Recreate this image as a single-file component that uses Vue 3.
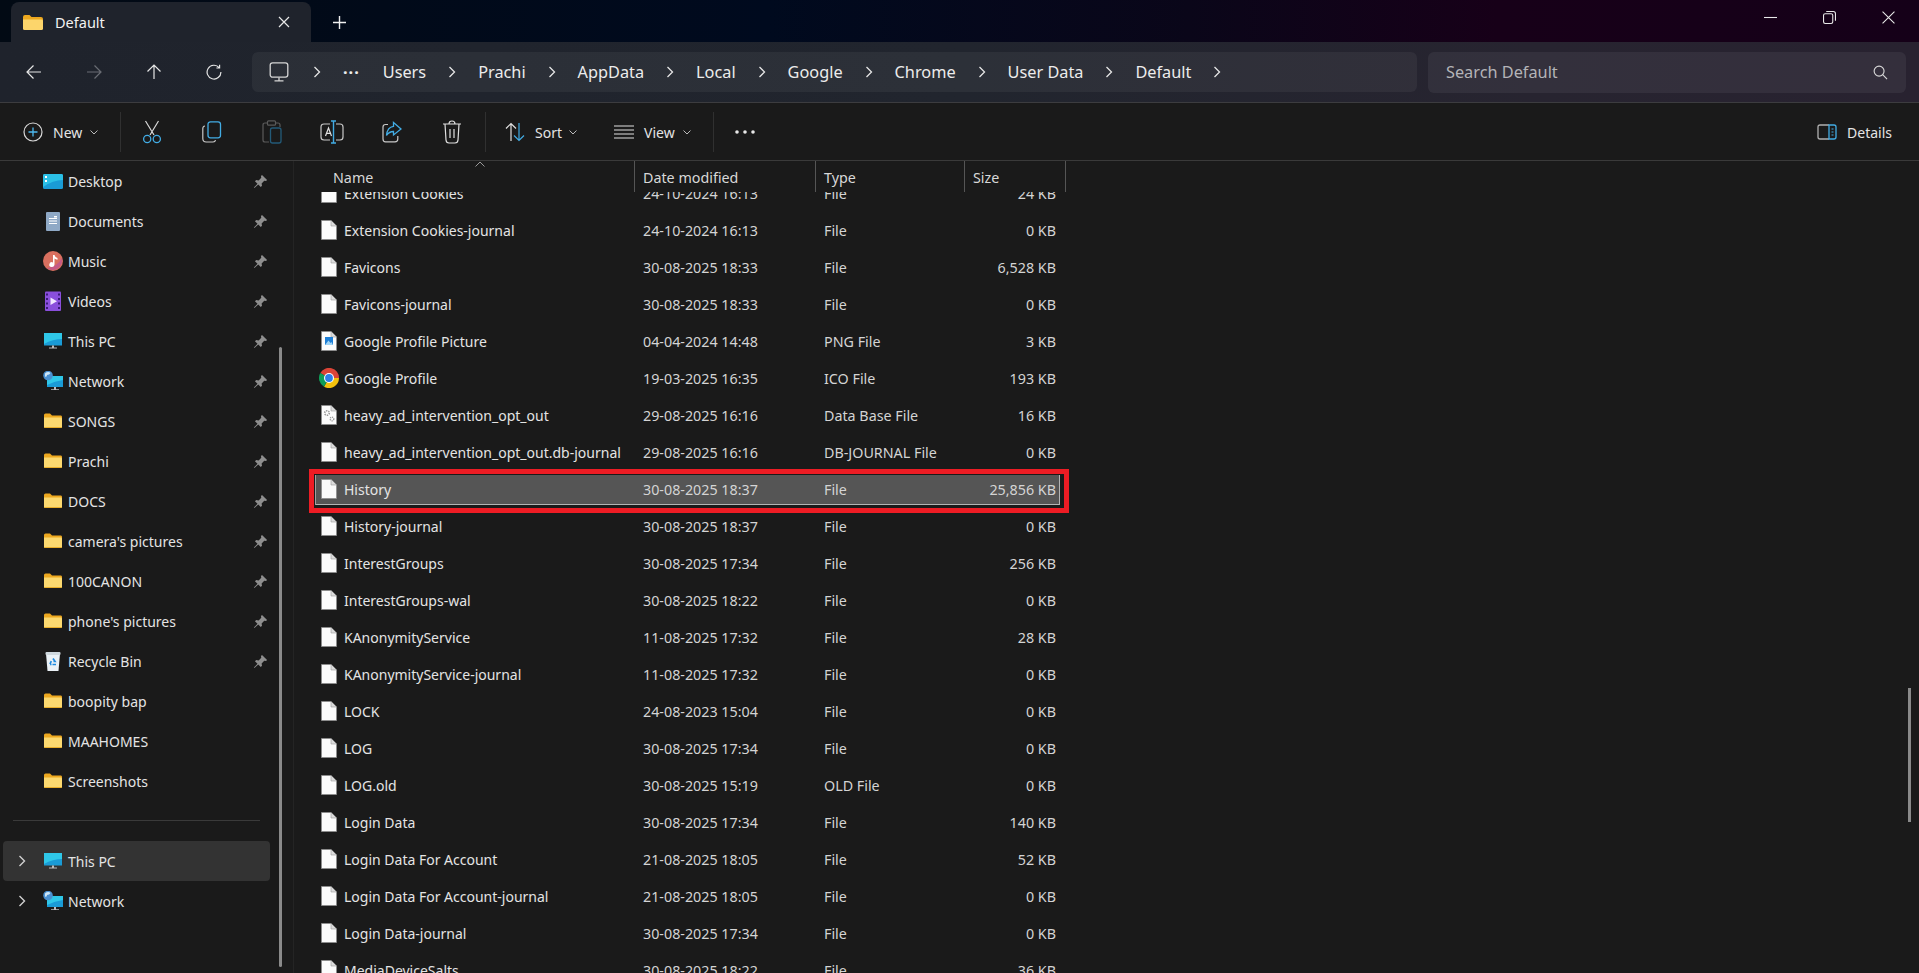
<template>
  <div class="explorer">
    <!-- tab strip -->
    <header class="titlebar">
      <div class="tab">
        <svg class="tab-folder" viewBox="0 0 20 15" width="20" height="15">
          <path d="M0 2 Q0 0 2 0 H6.5 L8.5 2 H18 Q20 2 20 4 V6 H0 Z" fill="#eda81f" />
          <path d="M0 4.5 H18.5 Q20 4.5 20 6 V13.5 Q20 15 18.5 15 H1.5 Q0 15 0 13.5 Z" fill="#fcd56b" />
        </svg>
        <span class="tab-label">Default</span>
        <svg class="tab-close" viewBox="0 0 12 12" width="12" height="12">
          <path d="M1 1 L11 11 M11 1 L1 11" stroke="#e8e8e8" stroke-width="1.2" fill="none" />
        </svg>
      </div>
      <svg class="tab-add" viewBox="0 0 12 12" width="13" height="13">
        <path d="M6 0 V12 M0 6 H12" stroke="#f0f0f0" stroke-width="1.3" fill="none" />
      </svg>
      <div class="window-controls">
        <svg viewBox="0 0 12 12" width="13" height="13"><path d="M0 6 H12" stroke="#e8e8e8" stroke-width="1" /></svg>
        <svg viewBox="0 0 12 12" width="13" height="13">
          <rect x="0.5" y="2.5" width="8.5" height="9" rx="1.5" fill="none" stroke="#e8e8e8" />
          <path d="M3 0.5 H9.5 Q11.5 0.5 11.5 2.5 V9" fill="none" stroke="#e8e8e8" />
        </svg>
        <svg viewBox="0 0 12 12" width="13" height="13"><path d="M0.5 0.5 L11.5 11.5 M11.5 0.5 L0.5 11.5" stroke="#e8e8e8" stroke-width="1" /></svg>
      </div>
    </header>

    <!-- navigation + address -->
    <div class="navbar">
      <div class="nav-buttons">
        <button class="nav-btn">
          <svg viewBox="0 0 16 16" width="16" height="16"><path d="M15 8 H1 M7.5 1.5 L1 8 L7.5 14.5" stroke="#e6e6e6" stroke-width="1.2" fill="none" /></svg>
        </button>
        <button class="nav-btn">
          <svg viewBox="0 0 16 16" width="16" height="16"><path d="M1 8 H15 M8.5 1.5 L15 8 L8.5 14.5" stroke="#6a6d74" stroke-width="1.2" fill="none" /></svg>
        </button>
        <button class="nav-btn">
          <svg viewBox="0 0 16 16" width="16" height="16"><path d="M8 15 V1 M1.5 7.5 L8 1 L14.5 7.5" stroke="#e6e6e6" stroke-width="1.2" fill="none" /></svg>
        </button>
        <button class="nav-btn">
          <svg viewBox="0 0 16 16" width="16" height="16"><path d="M13.2 3.6 A6.9 6.9 0 1 0 14.9 8 M13.6 0.8 V4 H10.4" stroke="#e6e6e6" stroke-width="1.2" fill="none" /></svg>
        </button>
      </div>
      <div class="address">
        <svg class="pc-icon" viewBox="0 0 20 20" width="20" height="20">
          <rect x="1.2" y="0.8" width="17.6" height="14.4" rx="2.4" fill="none" stroke="#d5d5d5" stroke-width="1.3" />
          <path d="M10 15.5 V18.5 M5.5 18.8 H14.5" stroke="#d5d5d5" stroke-width="1.3" fill="none" />
        </svg>
        <svg class="crumb-chev" viewBox="0 0 8 12" width="8" height="12"><path d="M1.5 1 L6.5 6 L1.5 11" stroke="#e6e6e6" stroke-width="1.3" fill="none" /></svg>
        <span class="crumb-more">···</span>
        <template v-for="part in crumbs" :key="part">
          <span class="crumb">{{ part }}</span>
          <svg class="crumb-chev" viewBox="0 0 8 12" width="8" height="12"><path d="M1.5 1 L6.5 6 L1.5 11" stroke="#e6e6e6" stroke-width="1.3" fill="none" /></svg>
        </template>
      </div>
      <div class="search">
        <span class="search-text">Search Default</span>
        <svg viewBox="0 0 16 16" width="15" height="15"><circle cx="6.5" cy="6.5" r="5.3" fill="none" stroke="#d8d8d8" stroke-width="1.2" /><path d="M10.3 10.3 L15 15" stroke="#d8d8d8" stroke-width="1.2" /></svg>
      </div>
    </div>

    <!-- command bar -->
    <div class="toolbar">
      <div class="tool-text tool-new">
        <svg viewBox="0 0 20 20" width="20" height="20">
          <circle cx="10" cy="10" r="9" fill="none" stroke="#d8d8d8" stroke-width="1.2" />
          <path d="M10 5.5 V14.5 M5.5 10 H14.5" stroke="#4cb8ee" stroke-width="1.3" />
        </svg>
        <span>New</span>
        <svg class="caret" viewBox="0 0 8 5" width="8" height="5"><path d="M0.5 0.5 L4 4 L7.5 0.5" stroke="#bbb" fill="none" /></svg>
      </div>
      <i class="tool-sep"></i>
      <div class="tool-group">
        <div class="tool-icon">
          <svg viewBox="0 0 20 24" width="20" height="24">
            <path d="M3.5 1 L12 15 M16.5 1 L8 15" stroke="#d8d8d8" stroke-width="1.2" fill="none" />
            <circle cx="5.2" cy="19" r="3.6" fill="none" stroke="#42ace4" stroke-width="1.3" />
            <circle cx="14.8" cy="19" r="3.6" fill="none" stroke="#42ace4" stroke-width="1.3" />
          </svg>
        </div>
        <div class="tool-icon">
          <svg viewBox="0 0 20 22" width="20" height="22">
            <path d="M3 5 Q0.8 5.3 0.8 7.5 V17.5 Q0.8 21 4.2 21 H11 Q13.2 21 13.5 19" fill="none" stroke="#c8c8c8" stroke-width="1.2" />
            <rect x="6" y="0.8" width="12.5" height="16" rx="2.5" fill="none" stroke="#42ace4" stroke-width="1.3" />
          </svg>
        </div>
        <div class="tool-icon">
          <svg viewBox="0 0 20 24" width="20" height="24">
            <path d="M6 3 H3 Q1 3 1 5 V20 Q1 22 3 22 H7 M14 3 H16 Q18 3 18 5 V7" fill="none" stroke="#5a5a5a" stroke-width="1.2" />
            <rect x="5.5" y="0.8" width="8" height="4.4" rx="1" fill="none" stroke="#5a5a5a" stroke-width="1.2" />
            <rect x="8.5" y="8" width="10.5" height="15" rx="2" fill="none" stroke="#235a78" stroke-width="1.3" />
          </svg>
        </div>
        <div class="tool-icon">
          <svg viewBox="0 0 24 24" width="24" height="24">
            <path d="M10 4 H4 Q1 4 1 7 V17 Q1 20 4 20 H10 M16 4 H20 Q23 4 23 7 V17 Q23 20 20 20 H16" fill="none" stroke="#c8c8c8" stroke-width="1.2" />
            <path d="M5.5 16 L8.5 8 L11.5 16 M6.7 13.3 H10.3" fill="none" stroke="#e0e0e0" stroke-width="1.2" />
            <path d="M13.5 1 V23 M11 1 H16 M11 23 H16" fill="none" stroke="#42ace4" stroke-width="1.4" />
          </svg>
        </div>
        <div class="tool-icon">
          <svg viewBox="0 0 20 22" width="20" height="22">
            <path d="M6 3.5 H3.5 Q1 3.5 1 6 V18 Q1 20.8 3.5 20.8 H13 Q15.8 20.8 15.8 18 V15" fill="none" stroke="#c8c8c8" stroke-width="1.2" />
            <path d="M11.5 1.5 L19 8 L11.5 14 V10.5 Q7 10.5 4.5 14.5 Q5.2 6 11.5 5.3 Z" fill="none" stroke="#42ace4" stroke-width="1.3" />
          </svg>
        </div>
        <div class="tool-icon">
          <svg viewBox="0 0 20 24" width="20" height="24">
            <path d="M1 4 H19 M7 4 Q7 1 10 1 Q13 1 13 4 M3 4 L4 20 Q4.2 23 7 23 H13 Q15.8 23 16 20 L17 4 M8 9 V18 M12 9 V18" fill="none" stroke="#e0e0e0" stroke-width="1.2" />
          </svg>
        </div>
      </div>
      <i class="tool-sep"></i>
      <div class="tool-text tool-sort">
        <svg viewBox="0 0 20 20" width="20" height="20">
          <path d="M6 19 V1.5 M1 6.5 L6 1.5 L11 6.5" fill="none" stroke="#e0e0e0" stroke-width="1.2" />
          <path d="M14 1 V18.5 M9 13.5 L14 18.5 L19 13.5" fill="none" stroke="#42ace4" stroke-width="1.2" />
        </svg>
        <span>Sort</span>
        <svg class="caret" viewBox="0 0 8 5" width="8" height="5"><path d="M0.5 0.5 L4 4 L7.5 0.5" stroke="#bbb" fill="none" /></svg>
      </div>
      <div class="tool-text tool-view">
        <svg viewBox="0 0 20 14" width="20" height="14">
          <path d="M0 1 H20 M0 5 H20 M0 9 H20 M0 13 H20" stroke="#e0e0e0" stroke-width="1.2" />
        </svg>
        <span>View</span>
        <svg class="caret" viewBox="0 0 8 5" width="8" height="5"><path d="M0.5 0.5 L4 4 L7.5 0.5" stroke="#bbb" fill="none" /></svg>
      </div>
      <i class="tool-sep"></i>
      <svg class="tool-more" viewBox="0 0 20 4" width="20" height="4">
        <circle cx="2" cy="2" r="1.8" fill="#e8e8e8" /><circle cx="10" cy="2" r="1.8" fill="#e8e8e8" /><circle cx="18" cy="2" r="1.8" fill="#e8e8e8" />
      </svg>
      <div class="tool-text tool-details">
        <svg viewBox="0 0 20 16" width="20" height="16">
          <path d="M12 1 H3 Q1 1 1 3 V13 Q1 15 3 15 H12" fill="none" stroke="#b0b0b0" stroke-width="1.3" />
          <path d="M12 1 H17 Q19 1 19 3 V13 Q19 15 17 15 H12 Z" fill="none" stroke="#42ace4" stroke-width="1.3" />
          <path d="M14.5 5 H16.5 M14.5 8 H16.5 M14.5 11 H16.5" stroke="#42ace4" stroke-width="1.2" />
        </svg>
        <span>Details</span>
      </div>
    </div>

    <div class="main">
      <!-- left tree -->
      <aside class="sidebar">
        <div class="side-list">
          <div v-for="item in pinned" :key="item.name" class="side-item">
            <SideIcon :kind="item.icon" />
            <span class="side-name">{{ item.name }}</span>
            <svg v-if="item.pin" class="pin" viewBox="0 0 16 16" width="15" height="15">
              <path d="M9.6 1 L15 6.4 L13.9 7.5 L12 7.2 L9.2 10 L9.6 12.6 L8.3 13.9 L5.6 11.2 L1.5 15 L1 14.5 L4.8 10.4 L2.1 7.7 L3.4 6.4 L6 6.8 L8.8 4 L8.5 2.1 Z" fill="#8f8f8f" />
            </svg>
          </div>
        </div>
        <hr class="side-rule" />
        <div class="side-item side-root active">
          <svg class="side-chev" viewBox="0 0 8 12" width="8" height="12"><path d="M1.5 1 L6.5 6 L1.5 11" stroke="#d0d0d0" stroke-width="1.4" fill="none" /></svg>
          <SideIcon kind="pc" />
          <span class="side-name">This PC</span>
        </div>
        <div class="side-item side-root">
          <svg class="side-chev" viewBox="0 0 8 12" width="8" height="12"><path d="M1.5 1 L6.5 6 L1.5 11" stroke="#d0d0d0" stroke-width="1.4" fill="none" /></svg>
          <SideIcon kind="net" />
          <span class="side-name">Network</span>
        </div>
        <i class="side-thumb"></i>
      </aside>

      <!-- file list -->
      <section class="files">
        <div class="file-head">
          <span class="col-name">Name</span>
          <span>Date modified</span>
          <span>Type</span>
          <span>Size</span>
          <svg class="sort-caret" viewBox="0 0 10 6" width="10" height="6"><path d="M0.5 5.5 L5 1 L9.5 5.5" stroke="#999" fill="none" /></svg>
        </div>
        <div class="file-body">
          <div class="file-list">
            <div v-for="file in files" :key="file.name" class="file-row" :class="{ selected: file.name === 'History' }">
              <div class="file-name">
                <svg v-if="file.icon === 'chrome'" class="file-icon chrome-icon" viewBox="0 0 20 20" width="20" height="20">
                  <path d="M10 10 L1.3 5 A10 10 0 0 1 20 10 Z" fill="#db4437" />
                  <path d="M10 10 L20 10 A10 10 0 0 1 5 18.7 Z" fill="#f4c20d" />
                  <path d="M10 10 L5 18.7 A10 10 0 0 1 1.3 5 Z" fill="#0f9d58" />
                  <circle cx="10" cy="10" r="5" fill="#fff" />
                  <circle cx="10" cy="10" r="3.9" fill="#2f7fe8" />
                </svg>
                <svg v-else class="file-icon" viewBox="0 0 16 20" width="16" height="20">
                  <path d="M0.5 0.5 H10 L15.5 6 V19.5 H0.5 Z" fill="#fbfbfb" stroke="#8d8d8d" stroke-width="0.8" />
                  <path d="M10 0.5 V6 H15.5" fill="#dcdcdc" stroke="#9a9a9a" stroke-width="0.6" />
                  <g v-if="file.icon === 'png'">
                    <rect x="4" y="6" width="8" height="8" fill="#1e7fd6" />
                    <path d="M4 14 L7.5 9.5 L9.5 12 L10.5 11 L12 14 Z" fill="#9fd3f5" />
                  </g>
                  <g v-if="file.icon === 'db'" fill="none" stroke="#9a9a9a">
                    <circle cx="6" cy="8" r="2.3" stroke-width="1.6" stroke-dasharray="1.3 0.9" />
                    <circle cx="11" cy="14" r="1.8" stroke-width="1.4" stroke-dasharray="1.1 0.8" />
                  </g>
                </svg>
                <span class="name-text">{{ file.name }}</span>
              </div>
              <span class="cell">{{ file.date }}</span>
              <span class="cell">{{ file.type }}</span>
              <span class="cell cell-size">{{ file.size }} KB</span>
            </div>
          </div>
          <i class="highlight-box"></i>
          <i class="list-thumb"></i>
        </div>
      </section>
    </div>
  </div>
</template>

<script setup>
import { h } from 'vue'

const crumbs = ['Users', 'Prachi', 'AppData', 'Local', 'Google', 'Chrome', 'User Data', 'Default']

const pinned = [
  { name: 'Desktop', icon: 'desktop', pin: true },
  { name: 'Documents', icon: 'docs', pin: true },
  { name: 'Music', icon: 'music', pin: true },
  { name: 'Videos', icon: 'videos', pin: true },
  { name: 'This PC', icon: 'pc', pin: true },
  { name: 'Network', icon: 'net', pin: true },
  { name: 'SONGS', icon: 'folder', pin: true },
  { name: 'Prachi', icon: 'folder', pin: true },
  { name: 'DOCS', icon: 'folder', pin: true },
  { name: "camera's pictures", icon: 'folder', pin: true },
  { name: '100CANON', icon: 'folder', pin: true },
  { name: "phone's pictures", icon: 'folder', pin: true },
  { name: 'Recycle Bin', icon: 'bin', pin: true },
  { name: 'boopity bap', icon: 'folder' },
  { name: 'MAAHOMES', icon: 'folder' },
  { name: 'Screenshots', icon: 'folder' }
]

const files = [
  { name: 'Extension Cookies', date: '24-10-2024 16:13', type: 'File', size: '24' },
  { name: 'Extension Cookies-journal', date: '24-10-2024 16:13', type: 'File', size: '0' },
  { name: 'Favicons', date: '30-08-2025 18:33', type: 'File', size: '6,528' },
  { name: 'Favicons-journal', date: '30-08-2025 18:33', type: 'File', size: '0' },
  { name: 'Google Profile Picture', date: '04-04-2024 14:48', type: 'PNG File', size: '3', icon: 'png' },
  { name: 'Google Profile', date: '19-03-2025 16:35', type: 'ICO File', size: '193', icon: 'chrome' },
  { name: 'heavy_ad_intervention_opt_out', date: '29-08-2025 16:16', type: 'Data Base File', size: '16', icon: 'db' },
  { name: 'heavy_ad_intervention_opt_out.db-journal', date: '29-08-2025 16:16', type: 'DB-JOURNAL File', size: '0' },
  { name: 'History', date: '30-08-2025 18:37', type: 'File', size: '25,856' },
  { name: 'History-journal', date: '30-08-2025 18:37', type: 'File', size: '0' },
  { name: 'InterestGroups', date: '30-08-2025 17:34', type: 'File', size: '256' },
  { name: 'InterestGroups-wal', date: '30-08-2025 18:22', type: 'File', size: '0' },
  { name: 'KAnonymityService', date: '11-08-2025 17:32', type: 'File', size: '28' },
  { name: 'KAnonymityService-journal', date: '11-08-2025 17:32', type: 'File', size: '0' },
  { name: 'LOCK', date: '24-08-2023 15:04', type: 'File', size: '0' },
  { name: 'LOG', date: '30-08-2025 17:34', type: 'File', size: '0' },
  { name: 'LOG.old', date: '30-08-2025 15:19', type: 'OLD File', size: '0' },
  { name: 'Login Data', date: '30-08-2025 17:34', type: 'File', size: '140' },
  { name: 'Login Data For Account', date: '21-08-2025 18:05', type: 'File', size: '52' },
  { name: 'Login Data For Account-journal', date: '21-08-2025 18:05', type: 'File', size: '0' },
  { name: 'Login Data-journal', date: '30-08-2025 17:34', type: 'File', size: '0' },
  { name: 'MediaDeviceSalts', date: '30-08-2025 18:22', type: 'File', size: '36' }
]

// coloured shell icons for the navigation tree, all on a 20x20 box
const shellIcons = {
  folder: [
    ['path', { d: 'M1 4 Q1 2.5 2.5 2.5 H7 L9 4.5 H18 Q19 4.5 19 6 V8 H1 Z', fill: '#eda81f' }],
    ['path', { d: 'M1 6.5 H17.8 Q19 6.5 19 7.8 V15.8 Q19 17 17.8 17 H2.2 Q1 17 1 15.8 Z', fill: '#fcd970' }],
    ['path', { d: 'M1 16 H19 V16 Q19 17 17.8 17 H2.2 Q1 17 1 16 Z', fill: '#e9ae2a' }]
  ],
  desktop: [
    ['rect', { x: 0, y: 3, width: 20, height: 15, rx: 1.5, fill: '#1a9bd6' }],
    ['path', { d: 'M0 4.5 Q0 3 1.5 3 H18.5 Q20 3 20 4.5 V9 Q10 9 0 16 Z', fill: '#2bc0e6' }],
    ['rect', { x: 2, y: 5, width: 2, height: 2, fill: '#fff' }],
    ['rect', { x: 2, y: 9, width: 2, height: 2, fill: '#fff' }]
  ],
  docs: [
    ['rect', { x: 3, y: 1, width: 14, height: 19, rx: 1, fill: '#8fa9c6' }],
    ['rect', { x: 6, y: 7, width: 8, height: 1, fill: '#fff' }],
    ['rect', { x: 6, y: 9.5, width: 8, height: 1, fill: '#fff' }],
    ['rect', { x: 6, y: 12, width: 8, height: 1, fill: '#fff' }],
    ['rect', { x: 11, y: 5, width: 3, height: 1.5, fill: '#fff' }]
  ],
  music: [
    ['circle', { cx: 10, cy: 10, r: 10, fill: '#d9705f' }],
    ['path', { d: 'M4 17 Q14 16 19 7 Q20 14 14 18 Q9 20.5 4 17 Z', fill: '#c55a86' }],
    ['path', { d: 'M10 4 H11.5 Q12 6.5 14.5 7 V8.8 Q12.8 8.6 11.5 7.5 V13.5 A2.6 2.4 0 1 1 10 11.4 Z', fill: '#fff' }]
  ],
  videos: [
    ['rect', { x: 2, y: 0.5, width: 16, height: 19.5, rx: 1, fill: '#8a4fdc' }],
    ['path', { d: 'M3 2.5 H5 V4.5 H3 Z M3 7 H5 V9 H3 Z M3 11.5 H5 V13.5 H3 Z M3 16 H5 V18 H3 Z M15 2.5 H17 V4.5 H15 Z M15 7 H17 V9 H15 Z M15 11.5 H17 V13.5 H15 Z M15 16 H17 V18 H15 Z', fill: '#3a1a78' }],
    ['path', { d: 'M7.5 6.5 L14 10.2 L7.5 14 Z', fill: '#f1e7ff' }]
  ],
  pc: [
    ['rect', { x: 1, y: 2, width: 18, height: 12.5, fill: '#1a9bd6' }],
    ['path', { d: 'M1 2 H19 V8 Q10 8 1 13 Z', fill: '#2fc7e8' }],
    ['path', { d: 'M9 14.5 H11 V16.5 H14 V17.5 H6 V16.5 H9 Z', fill: '#bcbcbc' }]
  ],
  net: [
    ['rect', { x: 4, y: 5, width: 16, height: 11, fill: '#1a9bd6' }],
    ['path', { d: 'M4 5 H20 V9 Q12 10 4 14 Z', fill: '#2fc7e8' }],
    ['path', { d: 'M11 16 H13 V18.2 H16 V19 H8 V18.2 H11 Z', fill: '#bcbcbc' }],
    ['circle', { cx: 5, cy: 4.5, r: 4.8, fill: '#4a90d0' }],
    ['path', { d: 'M2 2.5 Q5 0 7.5 2 Q6.5 4 4 4 Q4 6.5 2 5.5 Z', fill: '#cfe6f7' }]
  ],
  bin: [
    ['path', { d: 'M3 2.5 H17 L15.5 20 H4.5 Z', fill: '#eaf1f6' }],
    ['rect', { x: 2.5, y: 1, width: 15, height: 3, rx: 1, fill: '#cfd8de' }],
    ['path', { d: 'M10 7.5 L12 10.5 H10.5 M7 13 L8.3 10.2 M13 13.5 H9.5 M7 13.5 H8.5', stroke: '#1d8ae0', 'stroke-width': 1.7, fill: 'none' }]
  ]
}

function SideIcon(props) {
  const shapes = shellIcons[props.kind].map(([tag, attrs]) => h(tag, attrs))
  return h('svg', { class: 'side-icon', viewBox: '0 0 20 20', width: 20, height: 20 }, shapes)
}
SideIcon.props = ['kind']
</script>

<style scoped>
.explorer {
  display: flex;
  flex-direction: column;
  width: 1919px;
  height: 973px;
  overflow: hidden;
  background: #1a1a1a;
  color: #e4e4e4;
  font-family: "Noto Sans", "Open Sans", sans-serif;
  font-size: 14px;
}

.titlebar {
  display: flex;
  align-items: flex-end;
  flex: none;
  height: 42px;
  padding-left: 11px;
  background: linear-gradient(90deg, #020a14 0%, #000a1e 40%, #0a0619 62%, #170018 78%, #150018 100%);
}

.tab {
  display: flex;
  align-items: center;
  width: 300px;
  height: 40px;
  padding: 0 21px 0 12px;
  box-sizing: border-box;
  background: #1f232c;
  border-radius: 8px 8px 0 0;
}

.tab-label {
  flex: 1;
  margin-left: 12px;
  color: #f2f2f2;
  font-size: 14.5px;
}

.tab-add {
  margin: 0 0 13px 22px;
}

.window-controls {
  display: flex;
  gap: 46px;
  margin: 0 24px 18px auto;
}

.navbar {
  display: flex;
  align-items: center;
  flex: none;
  height: 60px;
  border-bottom: 1px solid #3c3c3f;
  background: linear-gradient(90deg, #1f232c 0%, #21252e 50%, #272430 80%, #282230 100%);
}

.nav-buttons {
  display: flex;
  width: 252px;
  padding-left: 4px;
  box-sizing: border-box;
}

.nav-btn {
  display: flex;
  align-items: center;
  justify-content: center;
  width: 60px;
  padding: 0;
  border: none;
  background: none;
}

.address {
  display: flex;
  align-items: center;
  width: 1165px;
  height: 40px;
  padding-left: 17px;
  box-sizing: border-box;
  border-radius: 6px;
  background: rgba(255, 255, 255, 0.05);
  font-size: 16.3px;
  color: #ececec;
}

.pc-icon {
  margin-right: 24px;
}

.crumb-chev {
  margin: 0 22px;
  flex: none;
}

.address .pc-icon + .crumb-chev {
  margin-left: 0;
}

.crumb-more {
  margin-right: 23px;
  font-weight: 700;
  letter-spacing: 1px;
}

.search {
  display: flex;
  align-items: center;
  justify-content: space-between;
  width: 478px;
  height: 41px;
  margin-left: 11px;
  padding: 0 18px;
  box-sizing: border-box;
  border-radius: 6px;
  background: rgba(255, 255, 255, 0.06);
}

.search-text {
  font-size: 16.3px;
  color: #b4b4b8;
}

.toolbar {
  display: flex;
  align-items: center;
  flex: none;
  height: 58px;
  padding-top: 1px;
  box-sizing: border-box;
  border-bottom: 1px solid #3a3a3a;
  background: #1a1a1a;
}

.tool-text {
  display: flex;
  align-items: center;
}

.tool-new {
  width: 120px;
  padding-left: 23px;
  box-sizing: border-box;
}

.tool-new span {
  margin: 0 8px 0 10px;
}

.tool-sep {
  width: 1px;
  height: 40px;
  background: #303030;
}

.tool-group {
  display: flex;
  width: 364px;
  padding-left: 1px;
  box-sizing: border-box;
}

.tool-icon {
  display: flex;
  align-items: center;
  justify-content: center;
  width: 60px;
}

.tool-sort {
  margin-left: 19px;
}

.tool-sort span {
  margin: 0 7px 0 10px;
}

.tool-view {
  margin-left: 37px;
}

.tool-view span {
  margin: 0 8px 0 10px;
}

.tool-view + .tool-sep {
  margin-left: 22px;
}

.tool-more {
  margin-left: 21px;
}

.tool-details {
  margin: 0 27px 0 auto;
}

.tool-details span {
  margin-left: 10px;
}

.main {
  display: flex;
  flex: 1;
  min-height: 0;
}

.sidebar {
  position: relative;
  flex: none;
  width: 293px;
  border-right: 1px solid #242424;
}

.side-item {
  display: flex;
  align-items: center;
  width: 267px;
  height: 40px;
  margin-left: 3px;
  padding-left: 40px;
  box-sizing: border-box;
  border-radius: 4px;
}

.side-item .pin {
  margin-left: auto;
  margin-right: 2px;
}

.side-name {
  margin-left: 5px;
}

.side-rule {
  width: 247px;
  height: 1px;
  margin: 19px 0 20px 13px;
  border: none;
  background: #3a3a3a;
}

.side-root {
  position: relative;
}

.side-root.active {
  background: #333;
}

.side-chev {
  position: absolute;
  left: 15px;
  top: 14px;
}

.side-thumb {
  position: absolute;
  top: 186px;
  bottom: 6px;
  left: 279px;
  width: 3px;
  border-radius: 2px;
  background: #8a8a8a;
}

.files {
  flex: 1;
  min-width: 0;
  display: flex;
  flex-direction: column;
}

.file-head {
  position: relative;
  display: grid;
  grid-template-columns: 320px 181px 149px 101px;
  width: 751px;
  height: 31px;
  margin-left: 21px;
  flex: none;
  color: #d8d8d8;
  font-size: 14.3px;
  line-height: 29px;
}

.file-head span {
  padding: 2px 0 0 8px;
  border-right: 1px solid #555;
  box-sizing: border-box;
}

.file-head .col-name {
  padding-left: 18px;
}

.sort-caret {
  position: absolute;
  top: 0;
  left: 160px;
}

.file-body {
  position: relative;
  flex: 1;
  min-height: 0;
  overflow: hidden;
}

.file-list {
  margin-top: -13px;
  padding-left: 21px;
}

.file-row {
  display: grid;
  grid-template-columns: 320px 181px 149px 95px;
  align-items: center;
  width: 745px;
  height: 30px;
  margin-bottom: 7px;
  box-sizing: border-box;
}

.file-row.selected {
  background: #555;
  box-shadow: inset 1px 0 0 #a0a0a0, inset -1px -1px 0 #b4b4b4;
}

.file-name {
  display: flex;
  align-items: center;
  padding-left: 6px;
}

.file-icon {
  flex: none;
  margin-top: -3px;
}

.chrome-icon {
  margin-left: -2px;
  margin-right: -2px;
}

.name-text {
  margin-left: 7px;
  padding-bottom: 2px;
  white-space: nowrap;
}

.cell {
  padding: 0 0 2px 8px;
  color: #d4d4d4;
  font-size: 14.3px;
}

.cell-size {
  padding: 0 4px 2px 0;
  text-align: right;
}

.highlight-box {
  position: absolute;
  top: 277px;
  left: 15px;
  width: 760px;
  height: 44px;
  box-sizing: border-box;
  border: 5px solid #ed1c24;
}

.list-thumb {
  position: absolute;
  top: 496px;
  left: 1614px;
  width: 3px;
  height: 134px;
  background: #8a8a8a;
}
</style>

<style>
html,
body {
  background: #1a1a1a;
  overflow: hidden;
}
</style>
